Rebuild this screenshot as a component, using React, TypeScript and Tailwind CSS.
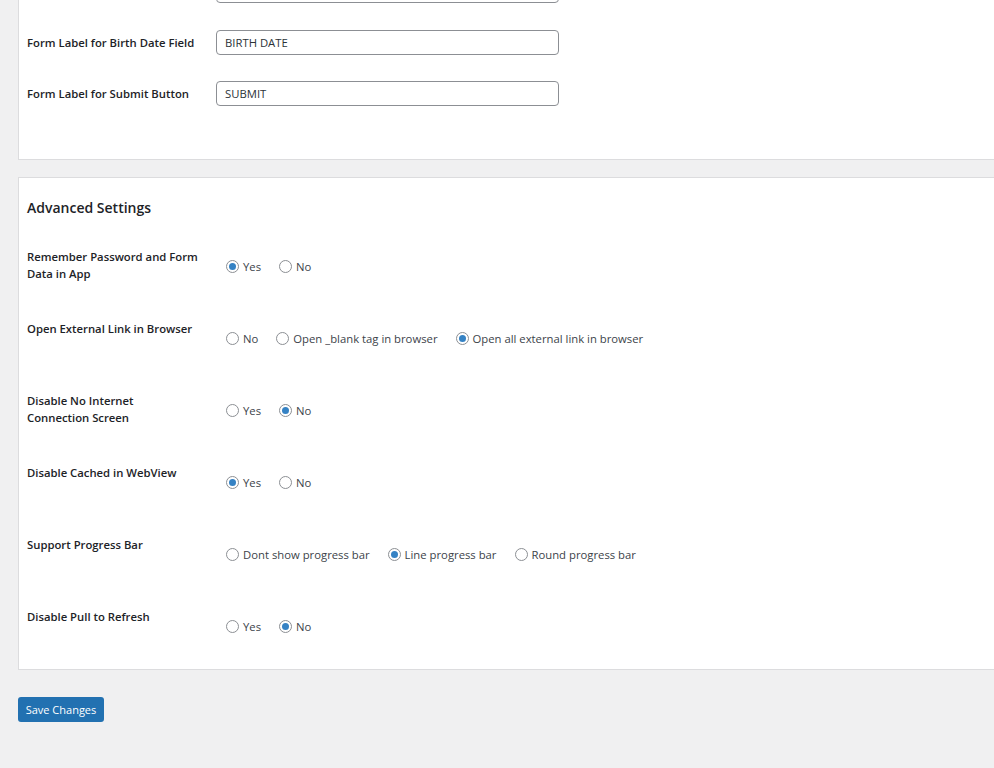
import React from 'react';

type Opt = { label: string; checked?: boolean };

const rows: { label: string[]; options: Opt[] }[] = [
  {
    label: ['Remember Password and Form', 'Data in App'],
    options: [{ label: 'Yes', checked: true }, { label: 'No' }],
  },
  {
    label: ['Open External Link in Browser'],
    options: [
      { label: 'No' },
      { label: 'Open _blank tag in browser' },
      { label: 'Open all external link in browser', checked: true },
    ],
  },
  {
    label: ['Disable No Internet', 'Connection Screen'],
    options: [{ label: 'Yes' }, { label: 'No', checked: true }],
  },
  {
    label: ['Disable Cached in WebView'],
    options: [{ label: 'Yes', checked: true }, { label: 'No' }],
  },
  {
    label: ['Support Progress Bar'],
    options: [
      { label: 'Dont show progress bar' },
      { label: 'Line progress bar', checked: true },
      { label: 'Round progress bar' },
    ],
  },
  {
    label: ['Disable Pull to Refresh'],
    options: [{ label: 'Yes' }, { label: 'No', checked: true }],
  },
];

const Radio: React.FC<Opt> = ({ label, checked }) => (
  <label className="flex items-center gap-[4px]">
    <span className="w-[13px] h-[13px] rounded-full border border-[#8c8f94] bg-white flex items-center justify-center">
      {checked && <span className="w-[7px] h-[7px] rounded-full bg-[#3582c4]" />}
    </span>
    <span>{label}</span>
  </label>
);

const TextRow: React.FC<{ label: string; value: string }> = ({ label, value }) => (
  <div className="flex items-center h-[51px]">
    <div className="w-[189px] font-semibold text-[#1d2327]">{label}</div>
    <div className="w-[343px] h-[25px] border border-[#8c8f94] rounded-[4px] bg-white px-[8px] flex items-center text-[#2c3338]">
      {value}
    </div>
  </div>
);

export default function App() {
  return (
    <div
      className="min-h-[768px] bg-[#f0f0f1] pl-[18px] overflow-hidden text-[11.3px] leading-[17px]"
      style={{ fontFamily: '"Open Sans", "Noto Sans", sans-serif' }}
    >
      <div className="bg-white border border-r-0 border-t-0 border-[#dcdcde] pl-[8px] pb-[40px]">
        {/* field scrolled off the top */}
        <div className="ml-[189px] -mt-[22px] w-[343px] h-[25px] border border-[#8c8f94] rounded-[4px] bg-white" />
        <div className="mt-[14px]">
          <TextRow label="Form Label for Birth Date Field" value="BIRTH DATE" />
          <TextRow label="Form Label for Submit Button" value="SUBMIT" />
        </div>
      </div>

      <div className="mt-[17px] bg-white border border-r-0 border-[#dcdcde] pl-[8px] pt-[20px]">
        <h2 className="text-[14px] leading-[20px] font-semibold text-[#1d2327] mb-[28px]">Advanced Settings</h2>
        {rows.map((row, i) => (
          <div key={i} className={`flex ${i === rows.length - 1 ? 'h-[63px]' : 'h-[72px]'}`}>
            <div className="w-[199px] pt-[2px] font-semibold text-[#1d2327]">
              {row.label.map((l) => (
                <div key={l}>{l}</div>
              ))}
            </div>
            <div className="pt-[12px] flex items-start gap-[18px] text-[#3c434a]">
              {row.options.map((o) => (
                <Radio key={o.label} {...o} />
              ))}
            </div>
          </div>
        ))}
      </div>

      <button className="mt-[27px] h-[25px] w-[86px] rounded-[3px] bg-[#2271b1] text-white text-[11px]">
        Save Changes
      </button>
    </div>
  );
}
